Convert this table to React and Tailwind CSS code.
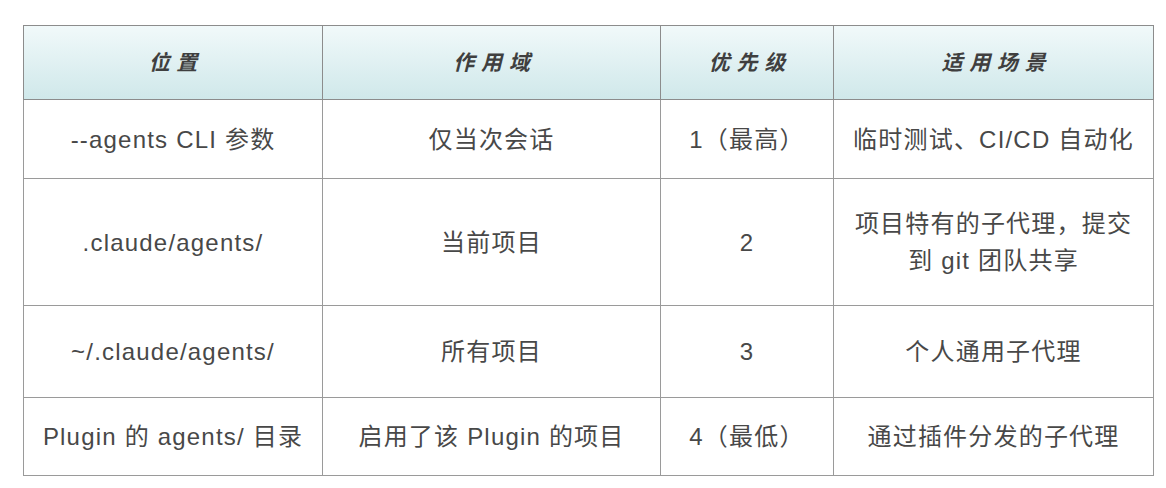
import React from "react";

const rows = [
  { h: "h-[79px]", cells: ["--agents CLI 参数", "仅当次会话", "1（最高）", "临时测试、CI/CD 自动化"] },
  { h: "h-[127px]", cells: [".claude/agents/", "当前项目", "2", "项目特有的子代理，提交\n到 git 团队共享"] },
  { h: "h-[92px]", cells: ["~/.claude/agents/", "所有项目", "3", "个人通用子代理"] },
  { h: "h-[78px]", cells: ["Plugin 的 agents/ 目录", "启用了该 Plugin 的项目", "4（最低）", "通过插件分发的子代理"] },
];

const heads = ["位置", "作用域", "优先级", "适用场景"];

export default function App() {
  return (
    <div
      className="w-[1166px] h-[488px] bg-white pt-[25px] pl-[23px]"
      style={{ fontFamily: '"Liberation Sans", "Noto Sans CJK SC", sans-serif' }}
    >
      <table className="border-collapse table-fixed text-[#484848]">
        <colgroup>
          <col className="w-[299px]" />
          <col className="w-[338px]" />
          <col className="w-[173px]" />
          <col className="w-[320px]" />
        </colgroup>
        <thead>
          <tr className="h-[74px] bg-gradient-to-b from-[#f1f9fa] to-[#cfe8ea]">
            {heads.map((t) => (
              <th
                key={t}
                className="border border-[#8c8c8c] text-[21px] font-bold italic tracking-[0.32em] text-[#3f3f3f] text-center"
              >
                <span className="pl-[0.32em]">{t}</span>
              </th>
            ))}
          </tr>
        </thead>
        <tbody>
          {rows.map((r, i) => (
            <tr key={i} className={r.h}>
              {r.cells.map((c, j) => (
                <td
                  key={j}
                  className="border border-[#9a9a9a] text-center text-[24px] tracking-[1.2px] leading-[37px] whitespace-pre-line px-1"
                >
                  {c}
                </td>
              ))}
            </tr>
          ))}
        </tbody>
      </table>
    </div>
  );
}
